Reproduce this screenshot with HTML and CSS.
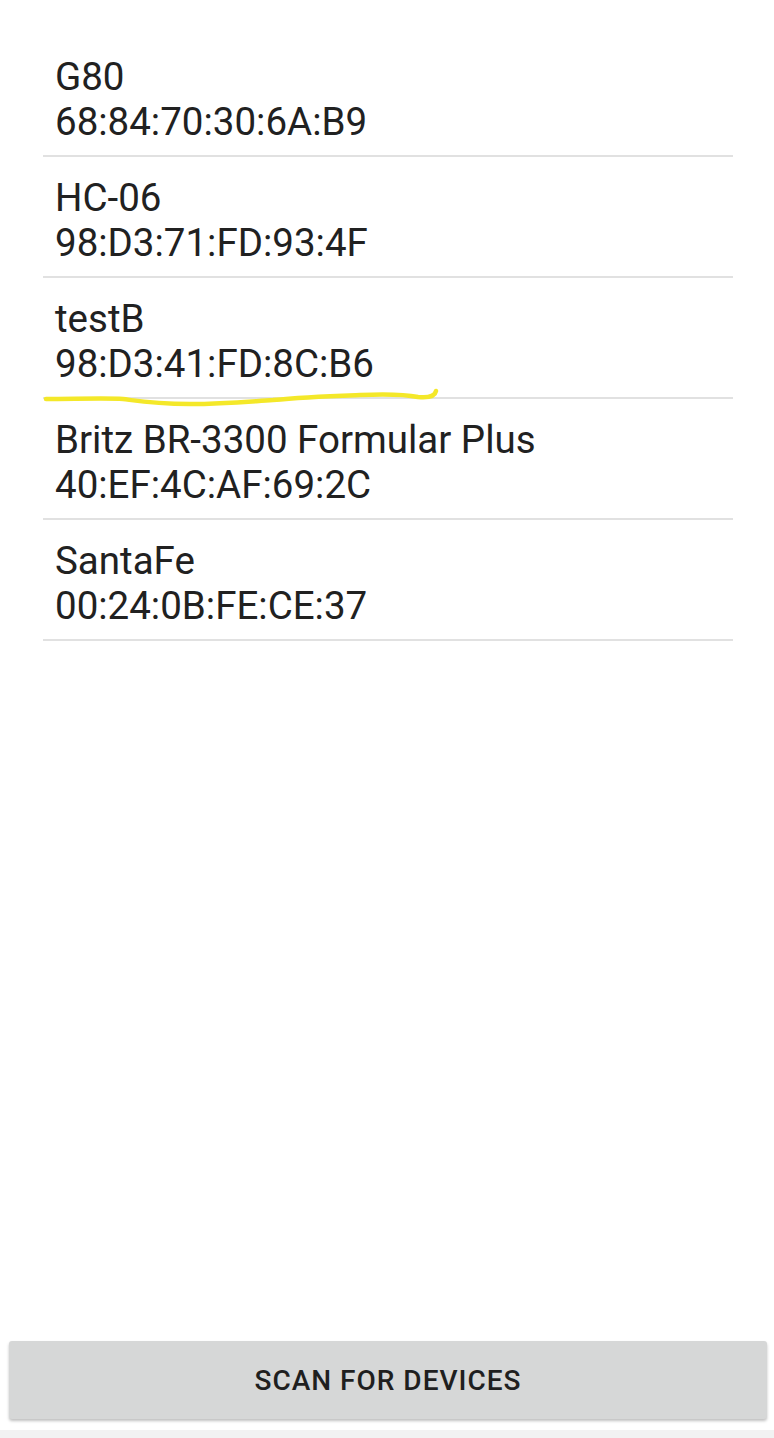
FILE: index.html
```html
<!DOCTYPE html>
<html>
<head>
<meta charset="utf-8">
<link rel="stylesheet" href="styles.css">
</head>
<body>
<div class="screen">
  <ul class="devices">
    <li class="device"><span class="name">G80</span><span class="addr">68:84:70:30:6A:B9</span></li>
    <li class="device"><span class="name">HC-06</span><span class="addr">98:D3:71:FD:93:4F</span></li>
    <li class="device marked"><span class="name">testB</span><span class="addr">98:D3:41:FD:8C:B6</span>
      <svg class="scribble" width="400" height="25" viewBox="0 0 400 25"><path d="M3 15 C 30 15, 65 14, 80 15 C 95 17, 110 20, 147 20 C 180 20, 200 18, 230 16 C 260 13, 290 12, 317 11 C 340 10, 360 10, 375 13 C 385 14, 392 12, 393 7" fill="none" stroke="#f4e829" stroke-width="4.5" stroke-linecap="round"/></svg>
    </li>
    <li class="device"><span class="name">Britz BR-3300 Formular Plus</span><span class="addr">40:EF:4C:AF:69:2C</span></li>
    <li class="device"><span class="name">SantaFe</span><span class="addr">00:24:0B:FE:CE:37</span></li>
  </ul>
  <div class="footer">
    <button class="scan">SCAN FOR DEVICES</button>
  </div>
  <div class="navstrip"></div>
</div>
</body>
</html>
```
FILE: styles.css
```css
html, body {
  margin: 0;
  padding: 0;
  background: #ffffff;
}
.screen {
  width: 774px;
  height: 1438px;
  display: flex;
  flex-direction: column;
  font-family: Roboto, "Liberation Sans", sans-serif;
  color: #212121;
  overflow: hidden;
}
.devices {
  list-style: none;
  margin: 0;
  padding: 36px 41px 0 43px;
  flex: 1;
}
.device {
  position: relative;
  display: flex;
  flex-direction: column;
  padding: 18px 0 11px 12px;
  border-bottom: 2px solid #e1e1e1;
  font-size: 38.5px;
  line-height: 45px;
}
.scribble {
  position: absolute;
  left: 0;
  bottom: -12px;
}
.footer {
  padding: 0 7px 11px 9px;
}
.scan {
  display: block;
  width: 100%;
  height: 78px;
  border: none;
  border-radius: 3px;
  background: #d6d7d7;
  box-shadow: 0 2px 3px rgba(0,0,0,0.25);
  font-family: Roboto, "Liberation Sans", sans-serif;
  font-size: 28px;
  font-weight: 500;
  color: #1f1f1f;
  letter-spacing: 1px;
  padding: 0;
}
.navstrip {
  height: 8px;
  background: #f2f2f2;
}
```
